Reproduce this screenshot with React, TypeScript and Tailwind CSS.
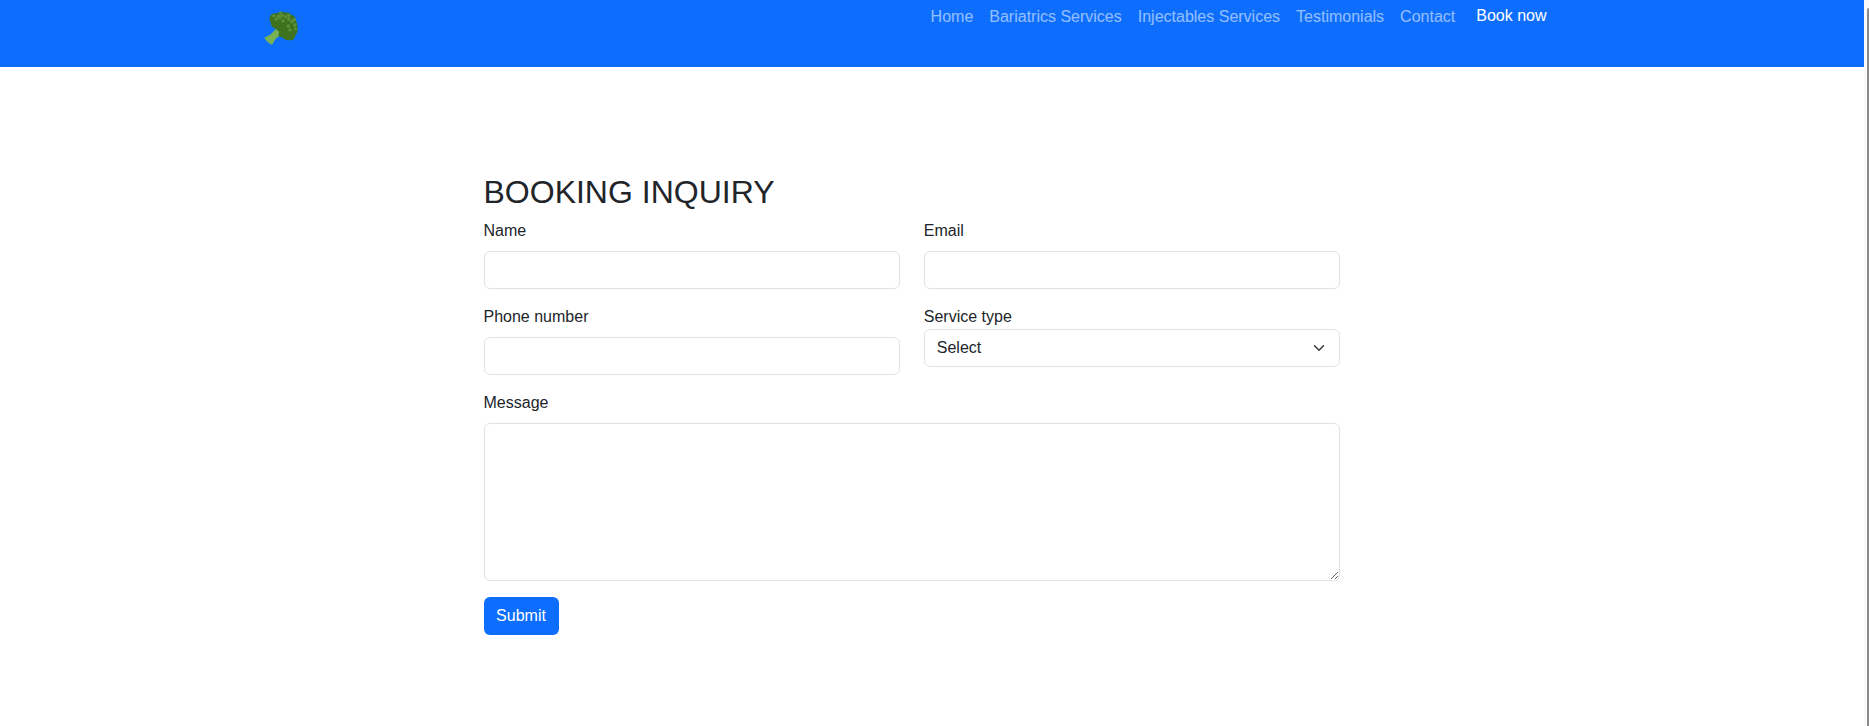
import type { ReactNode } from "react";

const links = [
  "Home",
  "Bariatrics Services",
  "Injectables Services",
  "Testimonials",
  "Contact",
];

const control =
  "block w-full rounded-md border border-[#dee2e6] bg-white px-3 py-1.5 text-base text-[#212529] outline-none";

function Broccoli() {
  return (
    <svg viewBox="0 0 34 34" className="h-[35px] w-[35px]" aria-label="Logo">
      <path
        d="M12.5 17.5C9 17 6.200 14.500 6.700 11.500C4.300 8.500 5.300 4 8.500 2.700C10.500 2.400 12.500 2 14.500 1.700C16.500-.2 18.500 1.300 20.500 1.600C24 .7 25.500 2.500 26.500 3.800C29.500 4.200 31 6.500 30.600 9C32.800 11.500 32.300 14 32.700 16.500C33.500 20 31.700 22 30.500 23.500C30.500 27.500 26.500 29 25 28.400C21 29 19 26.500 18 25.500C14.500 25.500 11.500 23.500 12.500 17.500Z"
        fill="#3e721d"
      />
      <path
        d="M11 17.600L14.700 20L14 25C11.500 26 10 29 8 32.800C4.500 31.500 1.500 28.500 .2 25.800C4.500 24.500 8.500 22 11 17.600Z"
        fill="#77b255"
      />
      <g fill="#5c913b">
        <circle cx="16" cy="1.900" r="1.500" />
        <circle cx="9.600" cy="4.700" r="1.600" />
        <circle cx="14" cy="5.200" r="1.700" />
        <circle cx="17.500" cy="4.300" r="1.700" />
        <circle cx="12" cy="8" r="1.700" />
        <circle cx="15.500" cy="6.800" r="1.500" />
        <circle cx="18.500" cy="9.600" r="1.700" />
        <circle cx="21" cy="5.500" r="1.600" />
        <circle cx="24" cy="4.300" r="1.600" />
        <circle cx="24" cy="7.800" r="1.700" />
        <circle cx="27" cy="10.200" r="1.700" />
        <circle cx="29.400" cy="8.500" r="1.600" />
        <circle cx="23.600" cy="14.500" r="1.700" />
        <circle cx="30" cy="13.600" r="1.700" />
        <circle cx="25.200" cy="18.400" r="1.600" />
        <circle cx="30.600" cy="17.300" r="1.600" />
      </g>
    </svg>
  );
}

function Navbar() {
  return (
    <header className="h-[67px] bg-[#0d6efd] pl-[264px] pr-[317.5px]">
      <div className="flex items-start justify-between">
        <a href="#" className="pt-[11px]">
          <Broccoli />
        </a>
        <nav className="flex pt-[5px]">
          {links.map((label) => (
            <a key={label} href="#" className="px-2 text-white/55">
              {label}
            </a>
          ))}
          <a href="#" className="-mt-px ml-[13px] text-white">
            Book now
          </a>
        </nav>
      </div>
    </header>
  );
}

function Field({ label, id, tight, children }: {
  label: string;
  id: string;
  tight?: boolean;
  children: ReactNode;
}) {
  return (
    <div>
      <label htmlFor={id} className={tight ? "block" : "mb-2 block"}>
        {label}
      </label>
      {children}
    </div>
  );
}

export default function App() {
  return (
    <div className="flex h-[726px] overflow-hidden bg-white font-['Liberation_Sans',Arial,sans-serif] text-base text-[#212529]">
      <div className="min-w-0 flex-1">
        <Navbar />
        <main className="ml-[483.5px] w-[856.5px] pt-[106px]">
          <h2 className="mb-[7px] h-[39px] text-[32px] leading-[39px]">BOOKING INQUIRY</h2>
          <form className="grid grid-cols-2 gap-x-6 gap-y-4">
            <Field label="Name" id="name">
              <input id="name" type="text" className={control} />
            </Field>
            <Field label="Email" id="email">
              <input id="email" type="email" className={control} />
            </Field>
            <Field label="Phone number" id="phone">
              <input id="phone" type="text" className={control} />
            </Field>
            <Field label="Service type" id="service" tight>
              <div className="grid items-center">
                <select
                  id="service"
                  className={`${control} col-start-1 row-start-1 appearance-none`}
                >
                  <option>Select</option>
                </select>
                <svg
                  viewBox="0 0 16 16"
                  className="pointer-events-none col-start-1 row-start-1 mr-[13px] h-3 w-4 justify-self-end"
                  fill="none"
                  stroke="#343a40"
                  strokeWidth="2"
                  strokeLinecap="round"
                  strokeLinejoin="round"
                >
                  <path d="m2 5 6 6 6-6" />
                </svg>
              </div>
            </Field>
            <div className="col-span-2">
              <Field label="Message" id="message">
                <textarea id="message" className={`${control} h-[158px] resize-y`} />
              </Field>
            </div>
            <button
              type="button"
              className="h-[38px] w-[75px] rounded-md bg-[#0d6efd] text-base text-white"
            >
              Submit
            </button>
          </form>
        </main>
      </div>
      <div className="w-[5px] bg-[#fafafa] pl-[3px] pt-2">
        <div className="h-full rounded-tl-sm bg-[#8b8b8b]" />
      </div>
    </div>
  );
}
